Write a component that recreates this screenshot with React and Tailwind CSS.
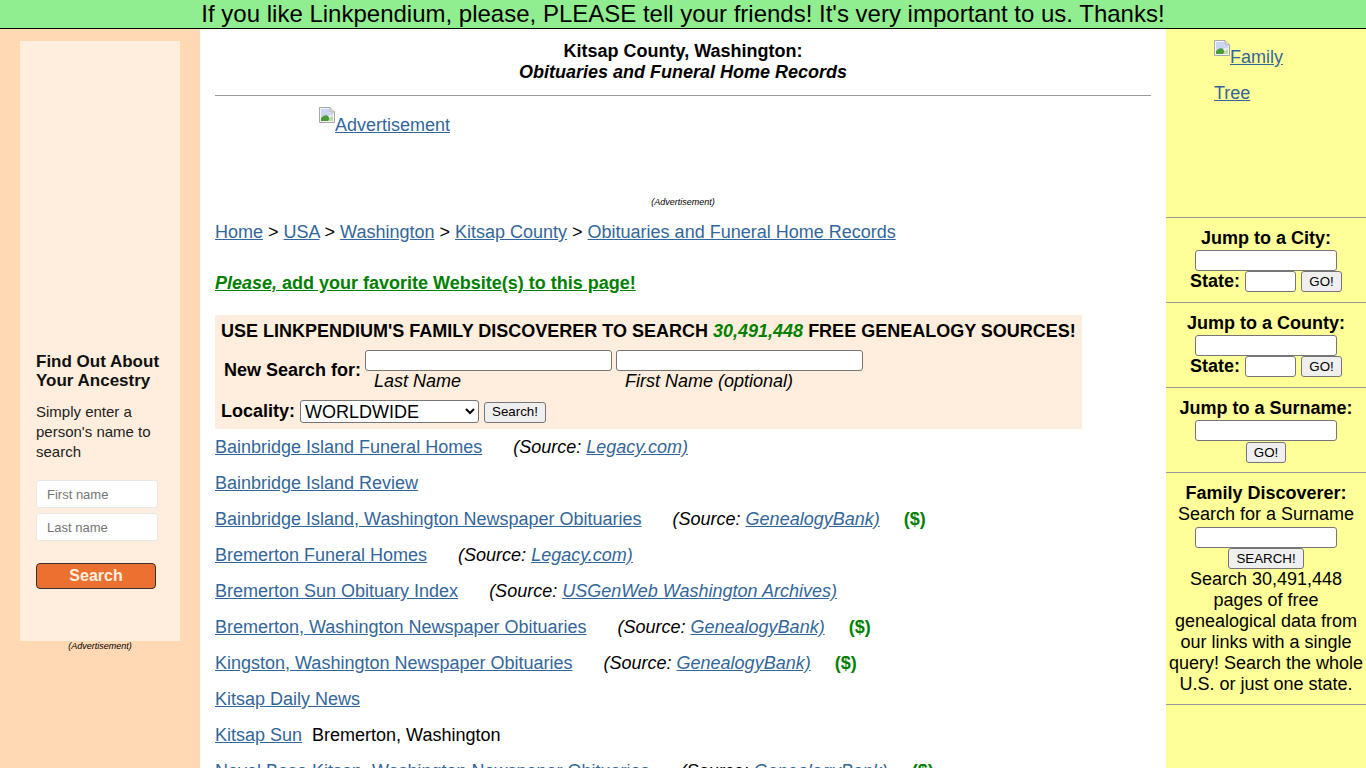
const LINK = 'text-[#336699] underline';

function BrokenImg() {
  return (
    <svg width="16" height="16" viewBox="0 0 16 16" className="shrink-0">
      <path d="M0.5 0.5H11L15.5 5V15.5H0.5Z" fill="#f4f4f4" stroke="#a8a8a8" />
      <path d="M11 0.5V5H15.5" fill="#dcdcdc" stroke="#a8a8a8" />
      <path d="M2 2H10V6H14V8L2 10Z" fill="#c9d6f2" />
      <path d="M2 14V11C4.5 8.5 7 7.5 9 9L12 14Z" fill="#4b9a3a" />
      <path d="M9 14L11.5 10L14 9V14Z" fill="#b9dca8" />
    </svg>
  );
}

function SourceRow({ name, source, paid }) {
  return (
    <div className="h-[36px] leading-[21px] pt-[2px] whitespace-nowrap">
      <a className={LINK}>{name}</a>
      {source && (
        <i className="ml-[31px]">
          (Source: <a className={LINK}>{source}</a>
        </i>
      )}
      {paid && <b className="ml-[24px] text-[#008000]">($)</b>}
    </div>
  );
}

function JumpBox({ title, children }) {
  return (
    <div className="h-[85px] border-b border-[#999999] text-center pt-[10px] leading-[21px]">
      <div className="font-bold">{title}</div>
      {children}
    </div>
  );
}

function SmallInput({ className }) {
  return <input className={`h-[21px] bg-white border border-[#767676] rounded-[3px] ${className}`} />;
}

function GoButton({ label = 'GO!', className = 'w-[40px]' }) {
  return (
    <button className={`h-[21px] text-[13.33px] leading-none bg-[#efefef] border border-[#767676] rounded-[3px] ${className}`}>
      {label}
    </button>
  );
}

function StateRow() {
  return (
    <div className="flex justify-center items-center gap-[5px] h-[21px]">
      <b>State:</b>
      <SmallInput className="w-[51px]" />
      <GoButton className="w-[41px]" />
    </div>
  );
}

const rows = [
  { name: 'Bainbridge Island Funeral Homes', source: 'Legacy.com)' },
  { name: 'Bainbridge Island Review' },
  { name: 'Bainbridge Island, Washington Newspaper Obituaries', source: 'GenealogyBank)', paid: true },
  { name: 'Bremerton Funeral Homes', source: 'Legacy.com)' },
  { name: 'Bremerton Sun Obituary Index', source: 'USGenWeb Washington Archives)' },
  { name: 'Bremerton, Washington Newspaper Obituaries', source: 'GenealogyBank)', paid: true },
  { name: 'Kingston, Washington Newspaper Obituaries', source: 'GenealogyBank)', paid: true },
  { name: 'Kitsap Daily News' },
];

export default function App() {
  return (
    <div className="h-[768px] overflow-hidden bg-white text-black text-[18px] font-['Liberation_Sans',Arial,sans-serif]">
      <div className="h-[29px] bg-[#90ee90] border-b border-black text-center text-[24px] leading-[27px]">
        If you like Linkpendium, please, PLEASE tell your friends! It's very important to us. Thanks!
      </div>

      <div className="flex h-[739px]">
        {/* left ad column */}
        <div className="w-[200px] shrink-0 bg-[#ffd9b3] pt-[12px]">
          <div className="ml-[20px] w-[160px] h-[600px] bg-[#ffeedd] pl-[16px] pt-[311px]">
            <div className="text-[17px] leading-[19px] font-bold text-[#111111]">
              Find Out About<br />Your Ancestry
            </div>
            <div className="mt-[12px] text-[15px] leading-[20px] text-[#222222] w-[125px]">
              Simply enter a person's name to search
            </div>
            <input placeholder="First name" className="mt-[18px] block w-[122px] h-[28px] bg-white border border-[#e8e8e8] rounded-[3px] px-[10px] text-[13px] placeholder:text-[#757575]" />
            <input placeholder="Last name" className="mt-[5px] block w-[122px] h-[28px] bg-white border border-[#e8e8e8] rounded-[3px] px-[10px] text-[13px] placeholder:text-[#757575]" />
            <button className="mt-[22px] block w-[120px] h-[26px] bg-[#ec7030] border border-[#333333] rounded-[4px] text-[16px] leading-none font-bold text-[#fff0e0]">
              Search
            </button>
          </div>
          <div className="text-center text-[9px] italic leading-[11px]">(Advertisement)</div>
        </div>

        {/* main column */}
        <div className="w-[966px] shrink-0 px-[15px]">
          <div className="pt-[12px] text-center font-bold leading-[21px]">
            Kitsap County, Washington:<br />
            <i>Obituaries and Funeral Home Records</i>
          </div>
          <div className="mt-[12px] border-t border-[#999999]" />
          <div className="flex h-[88px] pl-[104px] pt-[11px] leading-[21px]">
            <BrokenImg />
            <a className={`${LINK} mt-[8px] h-[21px]`}>Advertisement</a>
          </div>
          <div className="mt-[13px] text-center text-[9px] italic leading-[11px]">(Advertisement)</div>
          <div className="mt-[14px] leading-[21px]">
            <a className={LINK}>Home</a> &gt; <a className={LINK}>USA</a> &gt; <a className={LINK}>Washington</a> &gt;{' '}
            <a className={LINK}>Kitsap County</a> &gt; <a className={LINK}>Obituaries and Funeral Home Records</a>
          </div>
          <div className="mt-[30px] leading-[21px] font-bold text-[#008000] underline">
            <i>Please,</i> add your favorite Website(s) to this page!
          </div>

          <div className="mt-[21px] w-[867px] h-[114px] bg-[#ffeedd] pl-[6px]">
            <div className="pt-[6px] leading-[21px] font-bold whitespace-nowrap">
              USE LINKPENDIUM'S FAMILY DISCOVERER TO SEARCH <i className="text-[#008000]">30,491,448</i> FREE GENEALOGY SOURCES!
            </div>
            <div className="flex mt-[8px] h-[42px]">
              <div className="ml-[3px] w-[141px] pt-[10px] leading-[21px] font-bold whitespace-nowrap">New Search for:</div>
              <div className="w-[251px]">
                <SmallInput className="block w-[247px]" />
                <i className="ml-[9px] mt-[1px] leading-[19px] block">Last Name</i>
              </div>
              <div>
                <SmallInput className="block w-[247px]" />
                <i className="ml-[9px] mt-[1px] leading-[19px] block">First Name (optional)</i>
              </div>
            </div>
            <div className="flex items-center mt-[7px] h-[24px]">
              <b>Locality:</b>
              <select className="ml-[5px] w-[179px] h-[23px] bg-white border border-[#767676] rounded-[3px] text-[18px] leading-none">
                <option>WORLDWIDE</option>
              </select>
              <GoButton label="Search!" className="ml-[5px] mt-[2px] w-[62px]" />
            </div>
          </div>

          <div className="mt-[6px]">
            {rows.map(r => (
              <SourceRow key={r.name} {...r} />
            ))}
            <div className="h-[36px] leading-[21px] pt-[2px]">
              <a className={LINK}>Kitsap Sun</a>
              <span className="ml-[10px]">Bremerton, Washington</span>
            </div>
            <SourceRow name="Naval Base Kitsap, Washington Newspaper Obituaries" source="GenealogyBank)" paid />
          </div>
        </div>

        {/* right column */}
        <div className="flex-1 bg-[#ffff99]">
          <div className="h-[189px] border-b border-[#999999] pl-[48px] pt-[11px] leading-[36px]">
            <div className="flex h-[36px]">
              <BrokenImg />
              <a className={`${LINK} h-[36px] -mt-[1px]`}>Family</a>
            </div>
            <a className={`${LINK} block w-fit -mt-[1px]`}>Tree</a>
          </div>
          <JumpBox title="Jump to a City:">
            <SmallInput className="block mx-auto w-[142px] mt-[1px]" />
            <StateRow />
          </JumpBox>
          <JumpBox title="Jump to a County:">
            <SmallInput className="block mx-auto w-[142px] mt-[1px]" />
            <StateRow />
          </JumpBox>
          <JumpBox title="Jump to a Surname:">
            <SmallInput className="block mx-auto w-[142px] mt-[1px]" />
            <div><GoButton /></div>
          </JumpBox>
          <div className="h-[232px] border-b border-[#999999] text-center pt-[10px] leading-[21px]">
            <div className="font-bold">Family Discoverer:</div>
            Search for a Surname
            <SmallInput className="block mx-auto w-[142px] mt-[2px]" />
            <div className="h-[22px] -mt-[1px]"><GoButton label="SEARCH!" className="w-[76px]" /></div>
            Search 30,491,448 pages of free genealogical data from our links with a single query! Search the whole U.S. or just one state.
          </div>
        </div>
      </div>
    </div>
  );
}
